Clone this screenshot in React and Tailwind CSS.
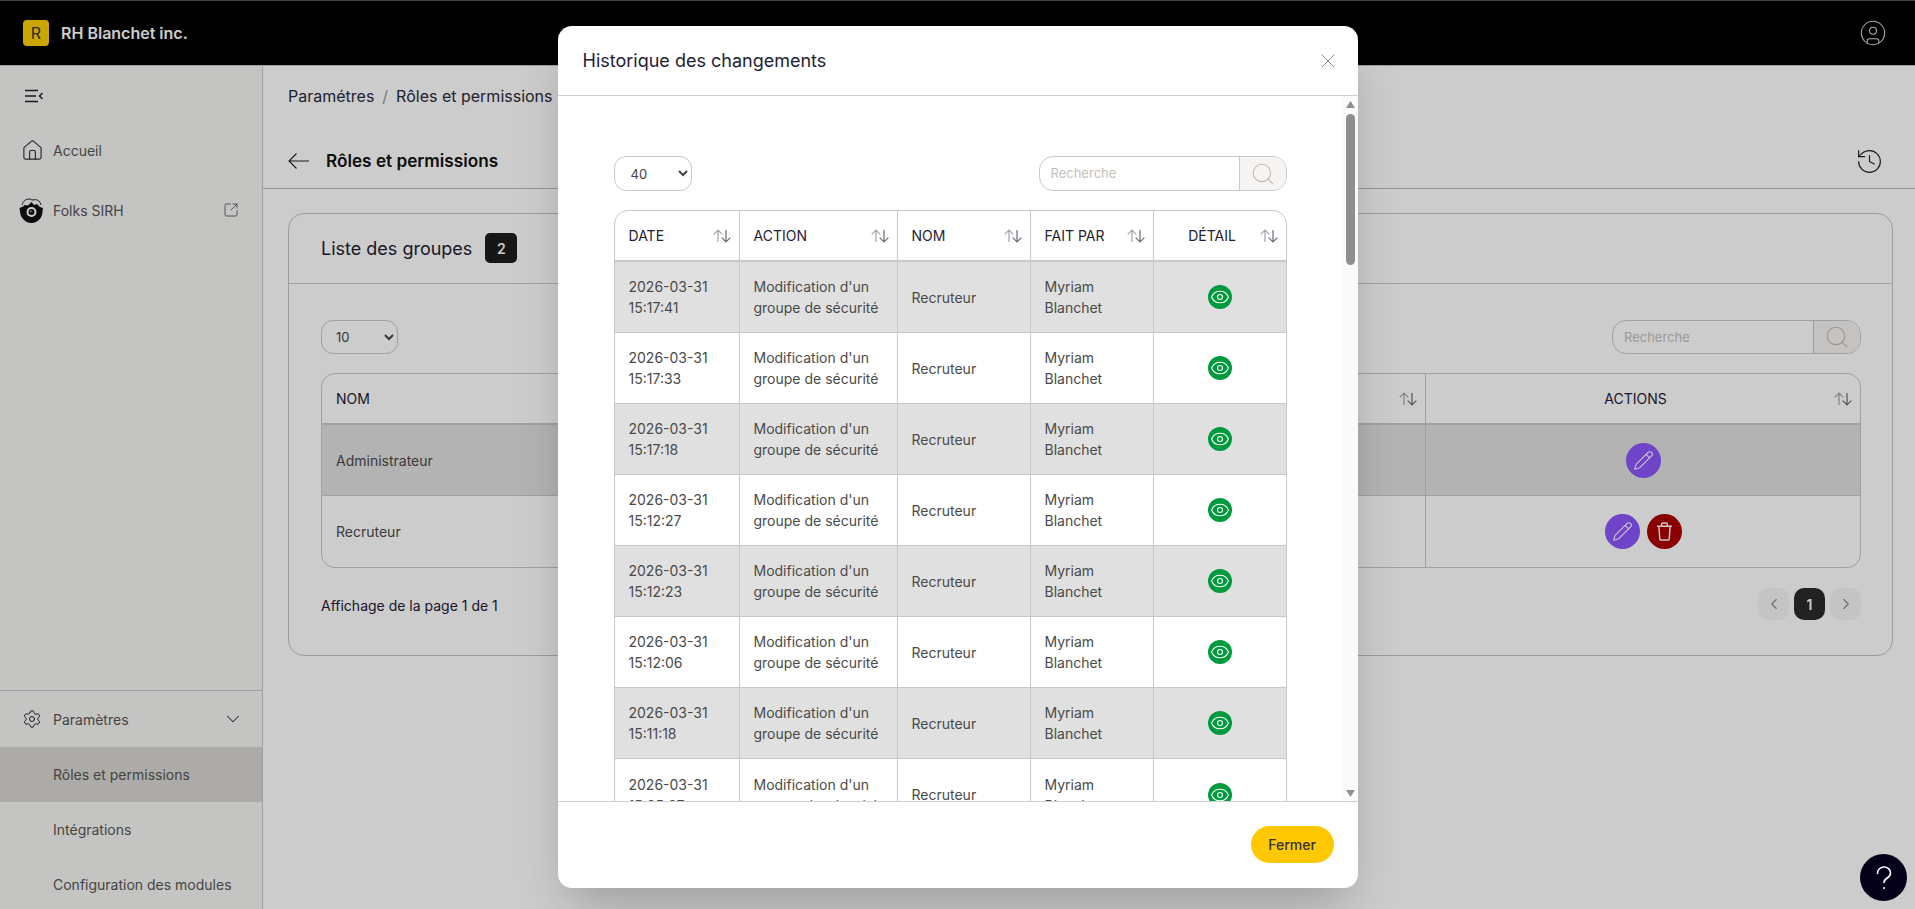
import React from 'react';
import { ChevronDown, ChevronLeft, ChevronRight, CircleUser, Eye, History, House, Pencil, Search, Settings, SquareArrowOutUpRight, X } from 'lucide-react';

// Lignes de l'historique
const historique = [
  { date: '2026-03-31', heure: '15:17:41' },
  { date: '2026-03-31', heure: '15:17:33' },
  { date: '2026-03-31', heure: '15:17:18' },
  { date: '2026-03-31', heure: '15:12:27' },
  { date: '2026-03-31', heure: '15:12:23' },
  { date: '2026-03-31', heure: '15:12:06' },
  { date: '2026-03-31', heure: '15:11:18' },
  { date: '2026-03-31', heure: '15:05:37' },
];

const SortIcon = () => (
  <svg width="18" height="16" viewBox="0 0 18 16" fill="none" strokeWidth="1.2" className="shrink-0">
    <path d="M5 14V2M.7 6.300 5 2l4.300 4.300" stroke="#a3a3ab" />
    <path d="M13 2v12M8.700 9.700 13 14l4.300-4.300" stroke="#6b6b75" />
  </svg>
);

const MenuIcon = () => (
  <svg width="18" height="14" viewBox="0 0 18 14" fill="none" stroke="#222" strokeWidth="1.5">
    <path d="M0 1.500h13M0 7h11M0 12.500h13M17.500 4 14.500 7l3 3" />
  </svg>
);

const BackArrow = () => (
  <svg width="21" height="16" viewBox="0 0 21 16" fill="none" stroke="#222" strokeWidth="1.1" className="shrink-0">
    <path d="M21 8H1M8.500.500 1 8l7.500 7.500" />
  </svg>
);

const FolksLogo = () => (
  <svg width="25" height="27" viewBox="0 0 25 27" fill="none">
    <path d="M3 8C4 4 7 2 10 2c2 0 2 1 4 1 3-1 7 0 8 5" stroke="#222" strokeWidth="1" />
    <path d="M12.500 5 15 8l3-1 3 3 3 1-.5 3c.4 6-4.500 12-11 12S1 20 1 14.500L.5 11 3 10l3-2 3 .5z" fill="#111" />
    <circle cx="12.500" cy="15" r="5" fill="#fff" />
    <circle cx="12.500" cy="15" r="3" fill="#111" />
    <circle cx="11.700" cy="14.200" r="0.800" fill="#fff" />
  </svg>
);

const TrashIcon = () => (
  <svg width="17" height="19" viewBox="0 0 18 20" fill="none" stroke="#fff" strokeWidth="1.500">
    <path d="M1 4.500h16M6 4.500V2a1 1 0 0 1 1-1h4a1 1 0 0 1 1 1v2.500M3 4.500 4 18a1 1 0 0 0 1 1h8a1 1 0 0 0 1-1l1-13.500" />
  </svg>
);

const HelpIcon = () => (
  <svg width="16" height="24" viewBox="0 0 16 24" fill="none" stroke="#fff" strokeWidth="1.600" strokeLinecap="round">
    <path d="M1.500 7.500C1.500 3.500 4.500 1 8 1s6.500 2.500 6.500 6c0 2.500-1.500 4-3.500 5.200-2 1.200-3 2.200-3 4.300" />
    <circle cx="8" cy="22" r="1" fill="#fff" stroke="none" />
  </svg>
);

const HeadCell = ({ label, center }) => (
  <th className="h-[51px] border-r border-b-2 border-[#c8c8c8] pl-[14px] pr-[8px] last:border-r-0 font-normal">
    <div className="flex items-center justify-between">
      <span className={`text-[14px] text-[#1f2033] ${center ? 'flex-1 pr-[3px] text-center' : ''}`}>{label}</span>
      <SortIcon />
    </div>
  </th>
);

const Cell = ({ children, center }) => (
  <td className={`h-[71px] border-r border-b border-[#c8c8c8] px-[14px] text-[14px] leading-[21px] text-[#4a4a4a] last:border-r-0 group-last:border-b-0 ${center ? 'text-center' : ''}`}>
    {children}
  </td>
);

const SearchBox = ({ className, height }) => (
  <div className={`flex ${height} overflow-hidden rounded-[14px] border border-[#c8c8c8] ${className}`}>
    <input placeholder="Recherche" className="min-w-0 flex-1 px-[11px] pt-[1px] text-[13px] outline-none placeholder:text-[#c4bfbb]" />
    <div className="flex w-[47px] items-center justify-center border-l border-[#c8c8c8] bg-[#f5f4f2]">
      <Search size={26} strokeWidth={1} color="#bdb9b5" />
    </div>
  </div>
);

const RoundButton = ({ color, children }) => (
  <button className={`flex size-[35px] items-center justify-center rounded-full ${color}`}>{children}</button>
);

export default function App() {
  return (
    <div className="relative flex h-screen w-full flex-col overflow-hidden bg-white font-[Inter,sans-serif]">
      {/* Barre du haut */}
      <header className="flex h-[66px] shrink-0 items-center justify-between border-t border-b border-t-[#555] border-b-[#c8c8c8] bg-black pl-[23px] pr-[28px]">
        <div className="flex items-center gap-[12px]">
          <div className="flex size-[26px] items-center justify-center rounded-[4px] bg-[#ffd000] text-[16px] text-[#333]">R</div>
          <span className="text-[16px] font-semibold text-white">RH Blanchet inc.</span>
        </div>
        <CircleUser size={28} strokeWidth={0.9} color="#ddd" />
      </header>

      <div className="flex min-h-0 flex-1">
        {/* Menu de gauche */}
        <aside className="flex w-[263px] shrink-0 flex-col border-r border-[#c8c8c8] bg-[#f6f5f3] text-[14px] text-[#555]">
          <div className="flex h-[58px] items-center pl-[25px] pt-[2px]"><MenuIcon /></div>
          <div className="mb-[3px] flex h-[53px] items-center pl-[21px]">
            <House size={23} strokeWidth={1.2} color="#333" />
            <span className="ml-[9px]">Accueil</span>
          </div>
          <div className="flex h-[60px] items-center pl-[19px] pr-[23px]">
            <FolksLogo />
            <span className="ml-[9px] flex-1">Folks SIRH</span>
            <SquareArrowOutUpRight size={16} strokeWidth={1.2} color="#444" />
          </div>
          <div className="flex-1" />
          <div className="h-[219px] shrink-0 overflow-hidden border-t border-[#c8c8c8]">
            <div className="flex h-[56px] items-center pl-[22px] pr-[18px]">
              <Settings size={20} strokeWidth={1.2} color="#222" />
              <span className="ml-[11px] flex-1">Paramètres</span>
              <ChevronDown size={22} strokeWidth={1.1} color="#333" />
            </div>
            <div className="flex h-[55px] items-center bg-[#d7d6d3] pl-[53px]">Rôles et permissions</div>
            <div className="flex h-[55px] items-center pl-[53px]">Intégrations</div>
            <div className="flex h-[55px] items-center pl-[53px]">Configuration des modules</div>
          </div>
        </aside>

        {/* Contenu principal */}
        <main className="min-w-0 flex-1">
          <div className="border-b border-[#b8b8b8] pl-[25px] pr-[22px]">
            <div className="flex h-[60px] items-center gap-[8px] text-[16px] text-[#2a2a3a]">
              <span>Paramétres</span>
              <span className="text-[#999]">/</span>
              <span>Rôles et permissions</span>
            </div>
            <div className="flex h-[62px] items-center pt-[8px]">
              <BackArrow />
              <h1 className="ml-[17px] flex-1 text-[17.2px] font-semibold text-[#111]">Rôles et permissions</h1>
              <History size={29} strokeWidth={0.95} color="#222" className="mr-[9px]" />
            </div>
          </div>

          <div className="pl-[25px] pr-[22px] pt-[24px]">
            <section className="rounded-[16px] border border-[#c4c4c4]">
              <div className="flex h-[70px] items-center gap-[13px] border-b border-[#c8c8c8] pb-[1px] pl-[32px]">
                <h2 className="text-[18px] text-[#1f2033]">Liste des groupes</h2>
                <span className="flex h-[30px] w-[32px] items-center justify-center rounded-[5px] bg-[#1c1c1c] text-[14px] font-semibold text-white">2</span>
              </div>
              <div className="pb-[35px] pl-[32px] pr-[31px] pt-[36px]">
                <div className="flex items-center justify-between">
                  <select defaultValue="10" className="h-[34px] w-[77px] rounded-[12px] border border-[#c8c8c8] bg-white pl-[10px] text-[13px] text-[#444]">
                    <option>10</option>
                    <option>40</option>
                  </select>
                  <SearchBox className="w-[249px]" height="h-[34px]" />
                </div>
                <div className="mt-[19px] overflow-hidden rounded-[14px] border border-[#c8c8c8]">
                  <table className="w-full table-fixed border-separate border-spacing-0">
                    <colgroup>
                      <col className="w-[600px]" />
                      <col />
                      <col className="w-[434px]" />
                    </colgroup>
                    <thead>
                      <tr>
                        <HeadCell label="NOM" />
                        <HeadCell label="" />
                        <HeadCell label="ACTIONS" center />
                      </tr>
                    </thead>
                    <tbody>
                      <tr className="group bg-[#e0e0e0]">
                        <Cell>Administrateur</Cell>
                        <Cell />
                        <Cell>
                          <div className="flex justify-center">
                            <RoundButton color="bg-[#8c55fa]"><Pencil size={21} strokeWidth={1.2} color="#fff" /></RoundButton>
                          </div>
                        </Cell>
                      </tr>
                      <tr className="group">
                        <Cell>Recruteur</Cell>
                        <Cell />
                        <Cell>
                          <div className="flex justify-center gap-[7px]">
                            <RoundButton color="bg-[#8c55fa]"><Pencil size={21} strokeWidth={1.2} color="#fff" /></RoundButton>
                            <RoundButton color="bg-[#ad0000]"><TrashIcon /></RoundButton>
                          </div>
                        </Cell>
                      </tr>
                    </tbody>
                  </table>
                </div>
                <div className="mt-[20px] flex items-start justify-between">
                  <span className="pt-[7px] text-[14px] text-[#1f2033]">Affichage de la page 1 de 1</span>
                  <div className="flex gap-[5px]">
                    <div className="flex h-[32px] w-[31px] items-center justify-center rounded-[10px] bg-[#f5f5f5]"><ChevronLeft size={18} strokeWidth={1.5} color="#888" /></div>
                    <div className="flex h-[32px] w-[31px] items-center justify-center rounded-[10px] bg-[#2b2b2b] text-[14px] font-semibold text-white">1</div>
                    <div className="flex h-[32px] w-[31px] items-center justify-center rounded-[10px] bg-[#f5f5f5]"><ChevronRight size={18} strokeWidth={1.5} color="#888" /></div>
                  </div>
                </div>
              </div>
            </section>
          </div>
        </main>
      </div>

      {/* Fenêtre de l'historique */}
      <div className="absolute inset-0 bg-black/20">
        <div className="mx-auto mt-[26px] flex h-[862px] w-[800px] flex-col overflow-hidden rounded-[14px] bg-white shadow-2xl">
          <div className="flex h-[70px] shrink-0 items-center justify-between border-b border-[#d0d0d0] pl-[25px] pr-[18px]">
            <h3 className="text-[18px] font-normal text-[#1f2033]">Historique des changements</h3>
            <X size={24} strokeWidth={1} color="#888" />
          </div>

          <div className="flex min-h-0 flex-1">
            <div className="min-w-0 flex-1 overflow-hidden px-[56px] pt-[60px]">
              <div className="flex items-center justify-between">
                <select defaultValue="40" className="h-[35px] w-[78px] rounded-[12px] border border-[#c8c8c8] bg-white pl-[12px] text-[13px] text-[#444]">
                  <option>10</option>
                  <option>40</option>
                </select>
                <SearchBox className="w-[248px]" height="h-[35px]" />
              </div>
              <div className="mt-[19px] overflow-hidden rounded-t-[14px] border border-[#c8c8c8]">
                <table className="w-full table-fixed border-separate border-spacing-0">
                  <colgroup>
                    <col className="w-[125px]" />
                    <col className="w-[158px]" />
                    <col className="w-[133px]" />
                    <col className="w-[123px]" />
                    <col />
                  </colgroup>
                  <thead>
                    <tr>
                      <HeadCell label="DATE" />
                      <HeadCell label="ACTION" />
                      <HeadCell label="NOM" />
                      <HeadCell label="FAIT PAR" />
                      <HeadCell label="DÉTAIL" center />
                    </tr>
                  </thead>
                  <tbody>
                    {historique.map((ligne, index) => (
                      <tr key={ligne.heure} className={`group ${index % 2 === 0 ? 'bg-[#e0e0e0]' : ''}`}>
                        <Cell>{ligne.date}<br />{ligne.heure}</Cell>
                        <Cell>Modification d'un groupe de sécurité</Cell>
                        <Cell>Recruteur</Cell>
                        <Cell>Myriam Blanchet</Cell>
                        <Cell>
                          <div className="flex justify-center">
                            <button className="flex size-[24px] items-center justify-center rounded-full bg-[#009a3e]">
                              <Eye size={20} strokeWidth={1.3} color="#fff" />
                            </button>
                          </div>
                        </Cell>
                      </tr>
                    ))}
                  </tbody>
                </table>
              </div>
            </div>
            {/* Barre de défilement */}
            <div className="flex w-[15px] shrink-0 flex-col items-center bg-[#fafafa] pt-[5px] pb-[4px]">
              <svg width="9" height="7" viewBox="0 0 9 7"><path d="M4.500 0 9 7H0z" fill="#8f8f8f" /></svg>
              <div className="mt-[6px] h-[151px] w-[9px] rounded-full bg-[#8f8f8f]" />
              <div className="flex-1" />
              <svg width="9" height="7" viewBox="0 0 9 7"><path d="M4.500 7 9 0H0z" fill="#8f8f8f" /></svg>
            </div>
          </div>

          <div className="flex h-[87px] shrink-0 items-center justify-end border-t border-[#d0d0d0] pb-[2px] pr-[24px]">
            <button className="h-[37px] w-[83px] rounded-full bg-[#ffc800] text-[14px] font-medium text-[#333]">Fermer</button>
          </div>
        </div>
      </div>

      {/* Bouton d'aide */}
      <button className="absolute bottom-[8px] right-[8px] flex size-[47px] items-center justify-center rounded-full bg-[#04001a]"><HelpIcon /></button>
    </div>
  );
}
